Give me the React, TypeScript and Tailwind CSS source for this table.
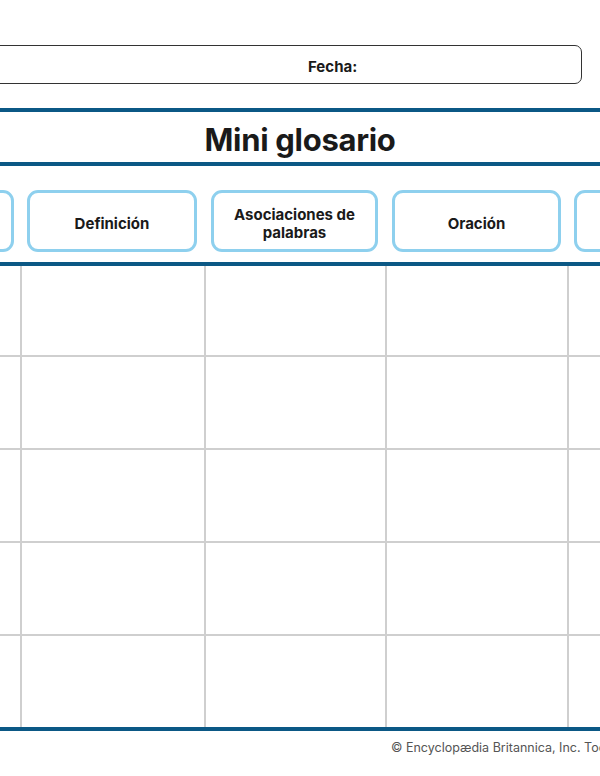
import React from "react";

const cols = "grid grid-cols-[184px_184px_181px_182px_184px]";

export default function App() {
  const headers = ["", "Definición", "Asociaciones de palabras", "Oración", ""];
  const rows = [0, 1, 2, 3, 4];
  return (
    <div
      className="w-[600px] h-[776px] overflow-hidden bg-white text-[#1a1a1a]"
      style={{ fontFamily: "Inter, 'Liberation Sans', sans-serif" }}
    >
      <div className="pt-[45px]">
        <div className="ml-[-20px] w-[602px] h-[39px] border-[1.5px] border-[#333333] rounded-[7px] flex items-center pl-[327px] pt-[5px]">
          <span className="text-[15px] font-bold">Fecha:</span>
        </div>
      </div>
      <div className="mt-[24px] h-[4px] bg-[#0b5885]" />
      <div className="h-[50px] flex items-center justify-center pt-[5px]">
        <h1 className="text-[31px] font-bold leading-none tracking-[-0.3px]">Mini glosario</h1>
      </div>
      <div className="h-[4px] bg-[#0b5885]" />
      <div className={`ml-[-164px] w-[915px] ${cols} pt-[24px] pb-[10px]`}>
        {headers.map((h, i) => (
          <div key={i} className={i === 0 ? "pl-[7px] pr-[6px]" : i === 3 ? "pl-[7px] pr-[6px]" : "px-[7px]"}>
            <div className="h-[62px] border-[3px] border-[#8ed0ee] rounded-[11px] flex items-center justify-center text-center px-3 pt-[5px]">
              <span className="text-[15px] font-bold leading-[18px]">{h}</span>
            </div>
          </div>
        ))}
      </div>
      <div className="h-[4px] bg-[#0b5885]" />
      <div className="ml-[-164px] w-[915px] flex flex-col">
        {rows.map((r) => (
          <div
            key={r}
            className={`${cols} ${r === 0 ? "h-[89px]" : "h-[93px] border-t-2 border-[#cfcfcf]"}`}
          >
            {[0, 1, 2, 3, 4].map((c) => (
              <div key={c} className={c === 0 ? "" : "border-l-2 border-[#cfcfcf]"} />
            ))}
          </div>
        ))}
      </div>
      <div className="h-[4px] bg-[#0b5885]" />
      <div className="pl-[391px] pt-[7px] whitespace-nowrap leading-none">
        <span className="text-[12.5px] text-[#555555]">
          © Encyclopædia Britannica, Inc. Todos los derechos reservados.
        </span>
      </div>
    </div>
  );
}
